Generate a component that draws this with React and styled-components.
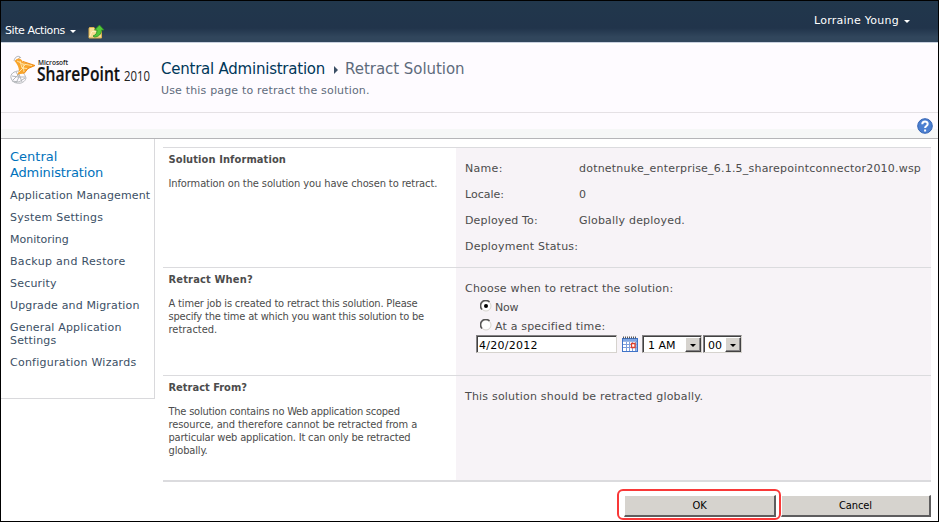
import React from 'react';
import styled, { createGlobalStyle } from 'styled-components';

const Global = createGlobalStyle`
  * { box-sizing: border-box; }
  body { margin: 0; background: #fff; font-family: 'DejaVu Sans', Verdana, sans-serif; }
`;
const Page = styled.div`
  width: 939px; height: 522px; border: 1px solid #000; background: #fff; overflow: hidden;
  color: #4c4c4c; font-size: 11px; line-height: 13px;
`;
const Label = styled.span`
  display: block; white-space: nowrap; letter-spacing: ${p => p.$ls || 0}px;
`;
const Ribbon = styled.header`
  height: 42px; display: flex; justify-content: space-between; padding: 0 28px 0 4px; color: #fff;
  background: linear-gradient(#21374c 0, #21344b 27px, #31465c 36px, #31465c 100%);
  border-bottom: 1px solid #c9d0df;
`;
const RibbonLeft = styled.div`display: flex; align-items: flex-start; padding-top: 23px;`;
const RibbonRight = styled.div`display: flex; align-items: flex-start; padding-top: 13px;`;
const Caret = styled.i`
  margin: ${p => p.$m}; border: 3px solid transparent; border-top-color: currentColor; border-bottom: 0; width: 0; height: 0;
`;
const FolderIcon = styled.svg`width: 17px; height: 15px; margin-left: 12px; display: block;`;
const TitleArea = styled.div`
  height: 70px; display: flex; border-top: 2px solid #fff; border-bottom: 1px solid #e5e1e5; background: #fefbff;
  padding-left: 8px;
`;
const Logo = styled.svg`width: 144px; height: 34px; margin-top: 8px; flex: none;`;
const Titles = styled.div`margin-left: 8px; padding-top: 14px; color: #5e6b7c;`;
const Crumbs = styled.h1`
  margin: 0; font-size: 15px; line-height: 20px; font-weight: 400; display: flex; align-items: center;
`;
const CrumbLink = styled.a`color: #003759; letter-spacing: ${p => p.$ls || 0}px; white-space: nowrap;`;
const CrumbArrow = styled.i`
  border: 4px solid transparent; border-left-color: #3b4f65; border-right: 0; margin: 2px 7px 0 9px;
`;
const Sub = styled.p`margin: 5px 0 0; white-space: nowrap; letter-spacing: ${p => p.$ls || 0}px;`;
const ToolStrip = styled.div`
  height: 26px; border-bottom: 1px solid #b5b5b8; display: flex; justify-content: flex-end; padding: 5px 5px 0 0;
  background: linear-gradient(#fefbff 16px, #f6f7f7 16px);
`;
const HelpIcon = styled.svg`width: 16px; height: 16px;`;
const Body = styled.div`display: flex; align-items: flex-start;`;
const Sidebar = styled.nav`
  width: 154px; height: 260px; border: solid #d9d9dc; border-width: 0 1px 1px 0; padding: 10px 0 0 9px; color: #3b4f65;
`;
const NavHead = styled.div`font-size: 13px; line-height: 16px; color: #0072bc; margin-bottom: 8px;`;
const NavItem = styled.div`line-height: 13px; margin-bottom: 9px;`;
const Main = styled.main`width: 768px; margin: 8px 0 0 8px;`;
const Section = styled.section`
  display: grid; grid-template-columns: 293px 1fr; height: ${p => p.$h}px; border-top: 1px solid #dbdbde;
  &:last-of-type { border-bottom: 2px solid #dbdbde; }
`;
const Description = styled.div`
  padding: 5px 0 0 5.500px; font-family: 'DejaVu Sans Condensed', 'DejaVu Sans', Tahoma, sans-serif; font-stretch: condensed;
`;
const Heading = styled.h2`
  margin: 0 0 11px; font-size: 11px; line-height: 13px; font-weight: 700; white-space: nowrap; letter-spacing: ${p => p.$ls || 0}px;
`;
const Panel = styled.div`background: #f7f3f7; padding: 14px 0 0 9px;`;
const Facts = styled.dl`
  margin: 0; display: grid; grid-template-columns: 114px 1fr; grid-auto-rows: 26px; dd { margin: 0; }
`;
const Options = styled.div`padding: 3px 0 0 15px;`;
const Option = styled.label`display: flex; align-items: center; height: 19px; gap: 3px;`;
const RadioMark = styled.svg`width: 12px; height: 12px; margin-top: -3px;`;
const DateRow = styled.div`display: flex; align-items: flex-start; margin-top: -1px; padding-left: 11px; color: #000;`;
const Sunken = styled.div`
  height: 18px; width: ${p => p.$w}px; margin-left: ${p => p.$ml || 0}px; background: #fff; border: 1px solid;
  border-color: #848284 #d6d3ce #d6d3ce #848284; box-shadow: inset 1px 1px #424142;
  display: flex; justify-content: space-between; padding: 1px 0 0 ${p => p.$pl}px; line-height: 17px;
`;
const DropButton = styled.span`
  width: 16px; height: 15px; background: #d6d3ce; border: 1px solid; border-color: #fff #424142 #424142 #fff;
  box-shadow: inset -1px -1px #848284; display: flex; align-items: center; justify-content: center;
`;
const CalendarIcon = styled.svg`width: 16px; height: 16px; margin: 1px 0 0 5px;`;
const Actions = styled.div`display: flex; justify-content: flex-end; margin-top: 7px; align-items: flex-start;`;
const Highlight = styled.div`
  width: 164px; height: 31px; border: 2px solid #f93838; border-radius: 6px; padding: 4px 2px 0 5px;
`;
const Button = styled.button`
  display: block; width: ${p => p.$w}px; height: 22px; margin: ${p => p.$mt || 0}px 0 0; padding: 1px 0 0; background: #d6d3ce; border: solid;
  border-width: 1px 2px 2px 1px; border-color: #fff #5e5d5e #5e5d5e #fff; color: #000; text-align: center;
  font: 11px/16px 'DejaVu Sans Condensed', 'DejaVu Sans', Tahoma, sans-serif; font-stretch: condensed;
  letter-spacing: -0.1px;
`;

const nav = [
  [['Application Management', 0.13]], [['System Settings', 0.24]], [['Monitoring', 0]], [['Backup and Restore', 0.32]],
  [['Security', 0.2]], [['Upgrade and Migration', 0.14]], [['General Application', 0.17], ['Settings', 0.15]],
  [['Configuration Wizards', 0.24]],
];
const facts = [
  ['Name:', 'dotnetnuke_enterprise_6.1.5_sharepointconnector2010.wsp', 0.3, 0.21], ['Locale:', '0', 0, 0],
  ['Deployed To:', 'Globally deployed.', 0.15, 0.2], ['Deployment Status:', '', 0.2, 0],
];

const Lines = ({ items }) => items.map(([t, ls]) => <Label key={t} $ls={ls}>{t}</Label>);

const Radio = ({ on }) => (
  <RadioMark viewBox="0 0 12 12">
    <circle cx="6" cy="6" r="5" fill="#fff" stroke="#d6d3ce" />
    <path d="M2 9.5A5.3 5.3 0 0 1 9.5 2" fill="none" stroke="#555" strokeWidth="1.6" />
    {on && <circle cx="6" cy="6" r="2" fill="#000" />}
  </RadioMark>
);

const Dropdown = ({ text, w, ml, pl }) => (
  <Sunken $w={w} $ml={ml} $pl={pl}><Label>{text}</Label><DropButton><Caret $m="1px 0 0" /></DropButton></Sunken>
);

export default function App() {
  return (
    <>
      <Global />
      <Page>
        <Ribbon>
          <RibbonLeft>
            <Label $ls={-0.42}>Site Actions</Label><Caret $m="6px 0 0 5px" />
            <FolderIcon viewBox="0 0 17 15">
              <path d="M1 4.500V14h12.500V6H7.500L6 3.500H1.500z" fill="#f7dc94" stroke="#d9ad4c" />
              <path d="M1.500 13L4 7.500h8" fill="none" stroke="#fff0bd" />
              <path d="M5 12C8 11 9 9 9 6H6.500L11.500 1 16 6h-2.500c0 4-3 7-7 7z" fill="#55c83a" stroke="#2b8d22" strokeWidth=".8" />
            </FolderIcon>
          </RibbonLeft>
          <RibbonRight><Label $ls={0.25}>Lorraine Young</Label><Caret $m="6px 0 0 5px" /></RibbonRight>
        </Ribbon>
        <TitleArea>
          <Logo viewBox="0 0 144 34">
            <g fill="none" stroke="#b3b6ba" strokeWidth="1">
              <path d="M5 8C6 3 10 2 12 5M7 9l4-5M2 25c-1-4 3-7 8-7 4 0 6 4 7 7-1 4-5 6-9 5-3 0-5-2-6-5z" />
              <path d="M3 23l6 1 7 0M4 27l6-6 3 8M7 19l3 5-3 6M3 28l7 1 6-4" />
            </g>
            <path d="M5.500 8C9 4 12 5 14 9l12 3.500-7 3-4 5-7 1C12 18 9 12 5.500 8z" fill="#f8a42c" />
            <path d="M8 8l6 3 9 1.500M11 8l2 7 4-4M10 19l4-4 4 .5M14 11l1 8" fill="none" stroke="#ffe9b0" strokeWidth=".9" />
            <path d="M14 8.500l12 4-7 3-4 5" fill="none" stroke="#ef8a10" />
            <text x="29" y="12" fontFamily="Open Sans" fontSize="7.5" fontWeight="600" textLength="30" lengthAdjust="spacingAndGlyphs" fill="#222">Microsoft</text>
            <text x="28" y="28" fontFamily="Open Sans" fontSize="19.5" fontWeight="600" textLength="83" lengthAdjust="spacingAndGlyphs" fill="#111" stroke="#111" strokeWidth=".2">SharePoint</text>
            <text x="115" y="28" fontFamily="Open Sans" fontSize="14.5" textLength="26" lengthAdjust="spacingAndGlyphs" fill="#222">2010</text>
          </Logo>
          <Titles>
            <Crumbs><CrumbLink $ls={-0.23}>Central Administration</CrumbLink><CrumbArrow /><Label $ls={-0.05}>Retract Solution</Label></Crumbs>
            <Sub $ls={0.17}>Use this page to retract the solution.</Sub>
          </Titles>
        </TitleArea>
        <ToolStrip>
          <HelpIcon viewBox="0 0 16 16">
            <circle cx="8" cy="8" r="7.300" fill="#4b7fd0" stroke="#3564b4" />
            <path d="M5.300 6.200C5.300 2.500 10.800 2.700 10.700 6c0 2-2.600 2-2.600 4M8.100 11.500v2" fill="none" stroke="#fff" strokeWidth="2" />
          </HelpIcon>
        </ToolStrip>
        <Body>
          <Sidebar>
            <NavHead><Label>Central</Label><Label $ls={-0.15}>Administration</Label></NavHead>
            {nav.map(l => <NavItem key={l[0][0]}><Lines items={l} /></NavItem>)}
          </Sidebar>
          <Main>
            <Section $h={120}>
              <Description>
                <Heading $ls={0.1}>Solution Information</Heading>
                <Label $ls={-0.1}>Information on the solution you have chosen to retract.</Label>
              </Description>
              <Panel>
                <Facts>
                  {facts.map(([k, v, kls, vls]) => (
                    <React.Fragment key={k}><dt><Label $ls={kls}>{k}</Label></dt><dd><Label $ls={vls}>{v}</Label></dd></React.Fragment>
                  ))}
                </Facts>
              </Panel>
            </Section>
            <Section $h={108}>
              <Description>
                <Heading $ls={0.17}>Retract When?</Heading>
                <Lines items={[['A timer job is created to retract this solution. Please', -0.16], ['specify the time at which you want this solution to be', -0.19], ['retracted.', 0]]} />
              </Description>
              <Panel>
                <Label $ls={0.2}>Choose when to retract the solution:</Label>
                <Options>
                  <Option><Radio on /><Label $ls={-0.2}>Now</Label></Option>
                  <Option><Radio /><Label $ls={0.18}>At a specified time:</Label></Option>
                </Options>
                <DateRow>
                  <Sunken $w={141} $pl={2}><Label $ls={0.25}>4/20/2012</Label></Sunken>
                  <CalendarIcon viewBox="0 0 16 16">
                    <path fill="#3f73c8" d="M0 2h16v14H0z" />
                    <path fill="#7ea6e4" d="M1 3h14v2H1z" />
                    <path stroke="#555" strokeDasharray="1 1" strokeWidth="2" d="M1 1.500h14" />
                    <path fill="#fff" d="M1 5.500h13.500V15H1z" />
                    <path stroke="#7f9fdb" d="M1 8.500h14M1 11.500h14M4.500 6v9M7.500 6v9M10.500 6v9M13.500 6v9" />
                    <path fill="#fff" stroke="#e0402a" strokeWidth="1.300" d="M9.500 7.500h3.500v4H9.500z" />
                  </CalendarIcon>
                  <Dropdown text="1 AM" w={60} ml={4} pl={5} />
                  <Dropdown text="00" w={39} ml={1} pl={4} />
                </DateRow>
              </Panel>
            </Section>
            <Section $h={107}>
              <Description>
                <Heading>Retract From?</Heading>
                <Lines items={[['The solution contains no Web application scoped', -0.23], ['resource, and therefore cannot be retracted from a', -0.09], ['particular web application. It can only be retracted', -0.18], ['globally.', -0.15]]} />
              </Description>
              <Panel><Label $ls={0.2}>This solution should be retracted globally.</Label></Panel>
            </Section>
            <Actions>
              <Highlight><Button $w={152}>OK</Button></Highlight>
              <Button $w={150} $mt={6}>Cancel</Button>
            </Actions>
          </Main>
        </Body>
      </Page>
    </>
  );
}
